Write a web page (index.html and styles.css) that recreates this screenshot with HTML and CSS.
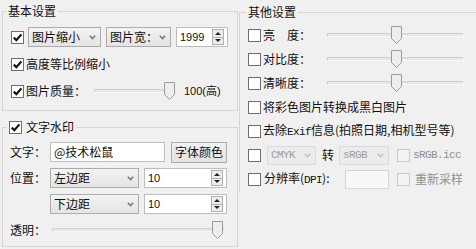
FILE: index.html
```html
<!doctype html>
<html lang="zh-CN">
<head>
    <meta charset="UTF-8">
    <meta name="viewport" content="width=device-width, initial-scale=1.0">
    <title>图片设置</title>
    <link rel="stylesheet" href="styles.css">
</head>
<body>
<div class="panel">
    <div class="col-left">
        <!-- 基本设置 -->
        <fieldset class="group group-basic">
            <legend>基本设置</legend>
            <div class="row">
                <span class="cb on"><svg viewBox="0 0 11 11"><path d="M1.8 5.6 L4.4 8.2 L9.4 2.4"/></svg></span>
                <div class="combo w-shrink"><span>图片缩小</span><svg class="arrow" viewBox="0 0 7 5"><path d="M0.8 0.8 L3.5 3.6 L6.2 0.8"/></svg></div>
                <div class="combo w-width"><span>图片宽：</span><svg class="arrow" viewBox="0 0 7 5"><path d="M0.8 0.8 L3.5 3.6 L6.2 0.8"/></svg></div>
                <div class="spin w-1999"><span class="num">1999</span><span class="spin-btns"><i class="up"></i><i class="down"></i></span></div>
            </div>
            <div class="row">
                <span class="cb on"><svg viewBox="0 0 11 11"><path d="M1.8 5.6 L4.4 8.2 L9.4 2.4"/></svg></span>
                <span class="txt">高度等比例缩小</span>
            </div>
            <div class="row">
                <span class="cb on"><svg viewBox="0 0 11 11"><path d="M1.8 5.6 L4.4 8.2 L9.4 2.4"/></svg></span>
                <span class="txt quality-label">图片质量：</span>
                <div class="slider slider-quality">
                    <span class="track"></span>
                    <svg class="thumb" style="left:70px" viewBox="0 0 11 18"><path d="M0.5 0.5 H10.5 V12.5 L5.5 17.5 L0.5 12.5 Z"/></svg>
                </div>
                <span class="num quality-val">100(高)</span>
            </div>
        </fieldset>

        <!-- 文字水印 -->
        <fieldset class="group group-mark">
            <legend>
                <span class="cb on"><svg viewBox="0 0 11 11"><path d="M1.8 5.6 L4.4 8.2 L9.4 2.4"/></svg></span>
                <span class="txt">文字水印</span>
            </legend>
            <div class="row">
                <span class="label">文字：</span>
                <div class="input w-text">@技术松鼠</div>
                <button class="btn">字体颜色</button>
            </div>
            <div class="row">
                <span class="label">位置：</span>
                <div class="combo w-pos"><span>左边距</span><svg class="arrow" viewBox="0 0 7 5"><path d="M0.8 0.8 L3.5 3.6 L6.2 0.8"/></svg></div>
                <div class="spin w-10"><span class="num">10</span><span class="spin-btns"><i class="up"></i><i class="down"></i></span></div>
            </div>
            <div class="row">
                <span class="label"></span>
                <div class="combo w-pos"><span>下边距</span><svg class="arrow" viewBox="0 0 7 5"><path d="M0.8 0.8 L3.5 3.6 L6.2 0.8"/></svg></div>
                <div class="spin w-10"><span class="num">10</span><span class="spin-btns"><i class="up"></i><i class="down"></i></span></div>
            </div>
            <div class="row">
                <span class="label">透明：</span>
                <div class="slider slider-alpha">
                    <span class="track"></span>
                    <svg class="thumb" style="left:160px" viewBox="0 0 11 18"><path d="M0.5 0.5 H10.5 V12.5 L5.5 17.5 L0.5 12.5 Z"/></svg>
                </div>
            </div>
        </fieldset>
    </div>

    <!-- 其他设置 -->
    <fieldset class="group group-other">
        <legend>其他设置</legend>
        <div class="row">
            <div class="opt"><span class="cb"></span><span class="txt">亮　度：</span></div>
            <div class="slider slider-side">
                <span class="track"></span>
                <svg class="thumb" style="left:64px" viewBox="0 0 11 18"><path d="M0.5 0.5 H10.5 V12.5 L5.5 17.5 L0.5 12.5 Z"/></svg>
            </div>
        </div>
        <div class="row">
            <div class="opt"><span class="cb"></span><span class="txt">对比度：</span></div>
            <div class="slider slider-side">
                <span class="track"></span>
                <svg class="thumb" style="left:64px" viewBox="0 0 11 18"><path d="M0.5 0.5 H10.5 V12.5 L5.5 17.5 L0.5 12.5 Z"/></svg>
            </div>
        </div>
        <div class="row">
            <div class="opt"><span class="cb"></span><span class="txt">清晰度：</span></div>
            <div class="slider slider-side">
                <span class="track"></span>
                <svg class="thumb" style="left:64px" viewBox="0 0 11 18"><path d="M0.5 0.5 H10.5 V12.5 L5.5 17.5 L0.5 12.5 Z"/></svg>
            </div>
        </div>
        <div class="row">
            <span class="cb"></span><span class="txt">将彩色图片转换成黑白图片</span>
        </div>
        <div class="row">
            <span class="cb"></span><span class="txt">去除<span class="en">Exif</span>信息(拍照日期,相机型号等)</span>
        </div>
        <div class="row">
            <span class="cb"></span>
            <div class="combo off w-cmyk"><span class="en">CMYK</span><svg class="arrow" viewBox="0 0 7 5"><path d="M0.8 0.8 L3.5 3.6 L6.2 0.8"/></svg></div>
            <span class="txt to">转</span>
            <div class="combo off w-srgb"><span class="en">sRGB</span><svg class="arrow" viewBox="0 0 7 5"><path d="M0.8 0.8 L3.5 3.6 L6.2 0.8"/></svg></div>
            <span class="cb off side-cb"></span><span class="en gray">sRGB.icc</span>
        </div>
        <div class="row">
            <span class="cb"></span>
            <span class="txt dpi-label">分辨率(<span class="en">DPI</span>):</span>
            <div class="input off w-dpi"></div>
            <span class="cb off side-cb"></span><span class="txt gray">重新采样</span>
        </div>
    </fieldset>
</div>
</body>
</html>
```

FILE: styles.css
```css
* {
    margin: 0;
    padding: 0;
    box-sizing: border-box;
}

html, body {
    width: 100%;
    height: 100%;
    overflow: hidden;
}

body {
    background-color: #f0f0f0;
    font-family: "Noto Sans CJK SC", "Liberation Sans", sans-serif;
    font-size: 12px;
    line-height: 16px;
    color: #111;
}

.panel {
    display: flex;
    align-items: flex-start;
}

.col-left {
    width: 236px;
    margin-left: 2px;
    display: flex;
    flex-direction: column;
}

/* group boxes */
.group {
    border: 1px solid #d6d6d6;
    min-width: 0;
}

.group legend {
    padding: 0 2px;
    line-height: 16px;
}

.group .row {
    display: flex;
    align-items: center;
    height: 20px;
}

.group-basic {
    margin-top: 3px;
    padding: 8px 9px 9px 8px;
    display: flex;
    flex-direction: column;
    gap: 7px;
}

.group-basic legend {
    margin-left: -5px;
}

.group-mark {
    margin-top: 8px;
    padding: 7px 10px 6px 7px;
    display: flex;
    flex-direction: column;
    gap: 6px;
}

.group-mark legend {
    display: flex;
    align-items: center;
    gap: 2px;
    margin-left: -3px;
}

.group-other {
    flex: 1;
    margin: 4px 0 0 1px;
    padding: 5px 0 3px 8px;
    border-right: none;
    border-bottom: none;
    display: flex;
    flex-direction: column;
    gap: 4px;
}

.group-other legend {
    margin-left: -2px;
}

/* checkbox */
.cb {
    display: inline-flex;
    flex: none;
    width: 13px;
    height: 13px;
    border: 1px solid #6e6e6e;
    background-color: #fff;
}

.cb svg {
    width: 11px;
    height: 11px;
}

.cb svg path {
    fill: none;
    stroke: #111;
    stroke-width: 2.2;
}

.cb.off {
    border-color: #c9c9c9;
    background-color: #f3f3f3;
}

.txt {
    margin-left: 2px;
    white-space: nowrap;
}

.gray {
    color: #8f8f8f;
}

.en {
    font-family: "Liberation Mono", monospace;
    font-size: 11px;
    letter-spacing: -0.6px;
}

.num {
    font-family: "Liberation Sans", sans-serif;
    font-size: 11px;
}

/* combobox */
.combo {
    display: flex;
    align-items: center;
    height: 20px;
    padding: 0 4px 0 3px;
    border: 1px solid #acacac;
    background: linear-gradient(#f3f3f3, #e4e4e4);
    white-space: nowrap;
}

.combo .arrow {
    width: 7px;
    height: 5px;
    margin-left: auto;
}

.combo .arrow path {
    fill: none;
    stroke: #7b7b7b;
    stroke-width: 1.6;
}

.combo.off {
    height: 19px;
    border-color: #dadada;
    background: #ececec;
    color: #9d9d9d;
}

.combo.off .arrow path {
    stroke: #c2c2c2;
}

.w-shrink {
    width: 73px;
    margin-left: 4px;
}

.w-width {
    width: 65px;
    margin-left: 5px;
}

.w-pos {
    width: 89px;
}

.w-cmyk {
    width: 49px;
    margin-left: 6px;
}

.w-srgb {
    width: 50px;
    margin-left: 5px;
}

.to {
    margin-left: 6px;
}

/* spin box */
.spin {
    display: flex;
    align-items: center;
    height: 20px;
    padding: 0 3px;
    border: 1px solid #bdbdbd;
    background-color: #fff;
}

.spin .spin-btns {
    display: flex;
    flex-direction: column;
    margin-left: auto;
    width: 12px;
    height: 16px;
    border: 1px solid #b0b0b0;
}

.spin-btns i {
    flex: 1;
    display: flex;
    align-items: center;
    justify-content: center;
    background-color: #ececec;
}

.spin-btns i + i {
    border-top: 1px solid #b0b0b0;
}

.spin-btns i::before {
    content: "";
    border-left: 3px solid transparent;
    border-right: 3px solid transparent;
}

.spin-btns .up::before {
    border-bottom: 3px solid #222;
}

.spin-btns .down::before {
    border-top: 3px solid #222;
}

.w-1999 {
    width: 52px;
    margin-left: 5px;
}

.w-10 {
    width: 83px;
    margin-left: 5px;
}

/* text input and button */
.label {
    width: 40px;
    flex: none;
}

.input {
    height: 20px;
    padding: 1px 3px 0;
    border: 1px solid #bdbdbd;
    background-color: #fff;
}

.input.off {
    border-color: #d6d6d6;
    background-color: #f8f8f8;
}

.w-text {
    width: 115px;
}

.btn {
    width: 56px;
    height: 21px;
    margin-left: 6px;
    border: 1px solid #acacac;
    background: linear-gradient(#f0f0f0, #e3e3e3);
    font: inherit;
    color: inherit;
}

.w-dpi {
    width: 44px;
    height: 19px;
}

.dpi-label {
    width: 81px;
    margin-left: 3px;
}

.side-cb {
    margin-left: 8px;
    margin-right: 3px;
}

/* sliders */
.slider {
    position: relative;
    height: 20px;
    display: flex;
    align-items: center;
}

.slider .track {
    display: block;
    width: 100%;
    height: 4px;
    border: 1px solid #d2d2d2;
    border-bottom-color: #f8f8f8;
    border-right-color: #f8f8f8;
    background-color: #e6e6e6;
}

.slider .thumb {
    position: absolute;
    top: 1px;
    width: 11px;
    height: 18px;
}

.slider .thumb path {
    fill: #ededed;
    stroke: #9a9a9a;
}

.quality-label {
    width: 68px;
}

.slider-quality {
    width: 80px;
}

.quality-val {
    margin-left: 10px;
    font-family: "Liberation Sans", "Noto Sans CJK SC", sans-serif;
}

.slider-alpha {
    width: 173px;
    margin-left: 2px;
}

.opt {
    display: flex;
    align-items: center;
    width: 79px;
}

.slider-side {
    width: 137px;
}
```
